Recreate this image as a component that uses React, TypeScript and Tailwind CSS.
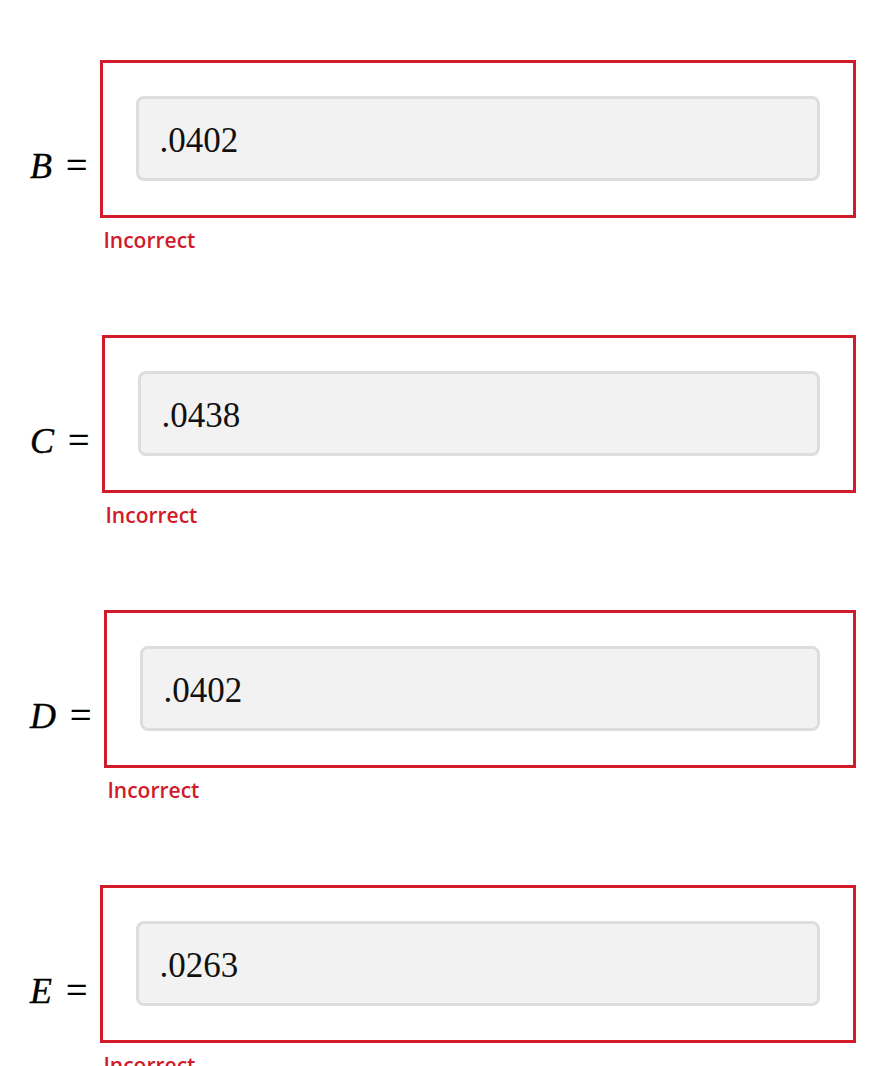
import React from "react";

type Answer = { label: string; value: string };

const answers: Answer[] = [
  { label: "B", value: ".0402" },
  { label: "C", value: ".0438" },
  { label: "D", value: ".0402" },
  { label: "E", value: ".0263" },
];

const AnswerRow = ({ label, value }: Answer) => {
  return (
    <div className="flex items-start">
      <div className="mt-[86px] flex items-baseline text-[36px] leading-none text-black [font-family:'Liberation_Serif',serif] [-webkit-text-stroke:0.4px_black]">
        <i>{label}</i>
        <span className="ml-[14px] text-[38px]">=</span>
      </div>
      <div className="ml-[13px] flex flex-1 flex-col">
        <div className="border-[3px] border-[#d11a2a] px-[33px] pt-[33px] pb-[34px]">
          <input
            readOnly
            defaultValue={value}
            className="h-[85px] w-full rounded-[8px] border-[3px] border-[#dddddd] bg-[#f2f2f2] pl-[20px] pt-[4px] text-[35px] text-[#111] outline-none [font-family:'Liberation_Serif',serif]"
          />
        </div>
        <p className="mt-[8px] pl-[3px] text-[21px] font-semibold leading-[28px] text-[#d11a2a] [font-family:'Open_Sans',sans-serif]">
          Incorrect
        </p>
      </div>
    </div>
  );
};

export default function App() {
  return (
    <div className="flex h-[1066px] flex-col gap-[81px] overflow-hidden bg-white pl-[30px] pr-[18px] pt-[60px]">
      {answers.map((a) => (
        <AnswerRow key={a.label} {...a} />
      ))}
    </div>
  );
}
